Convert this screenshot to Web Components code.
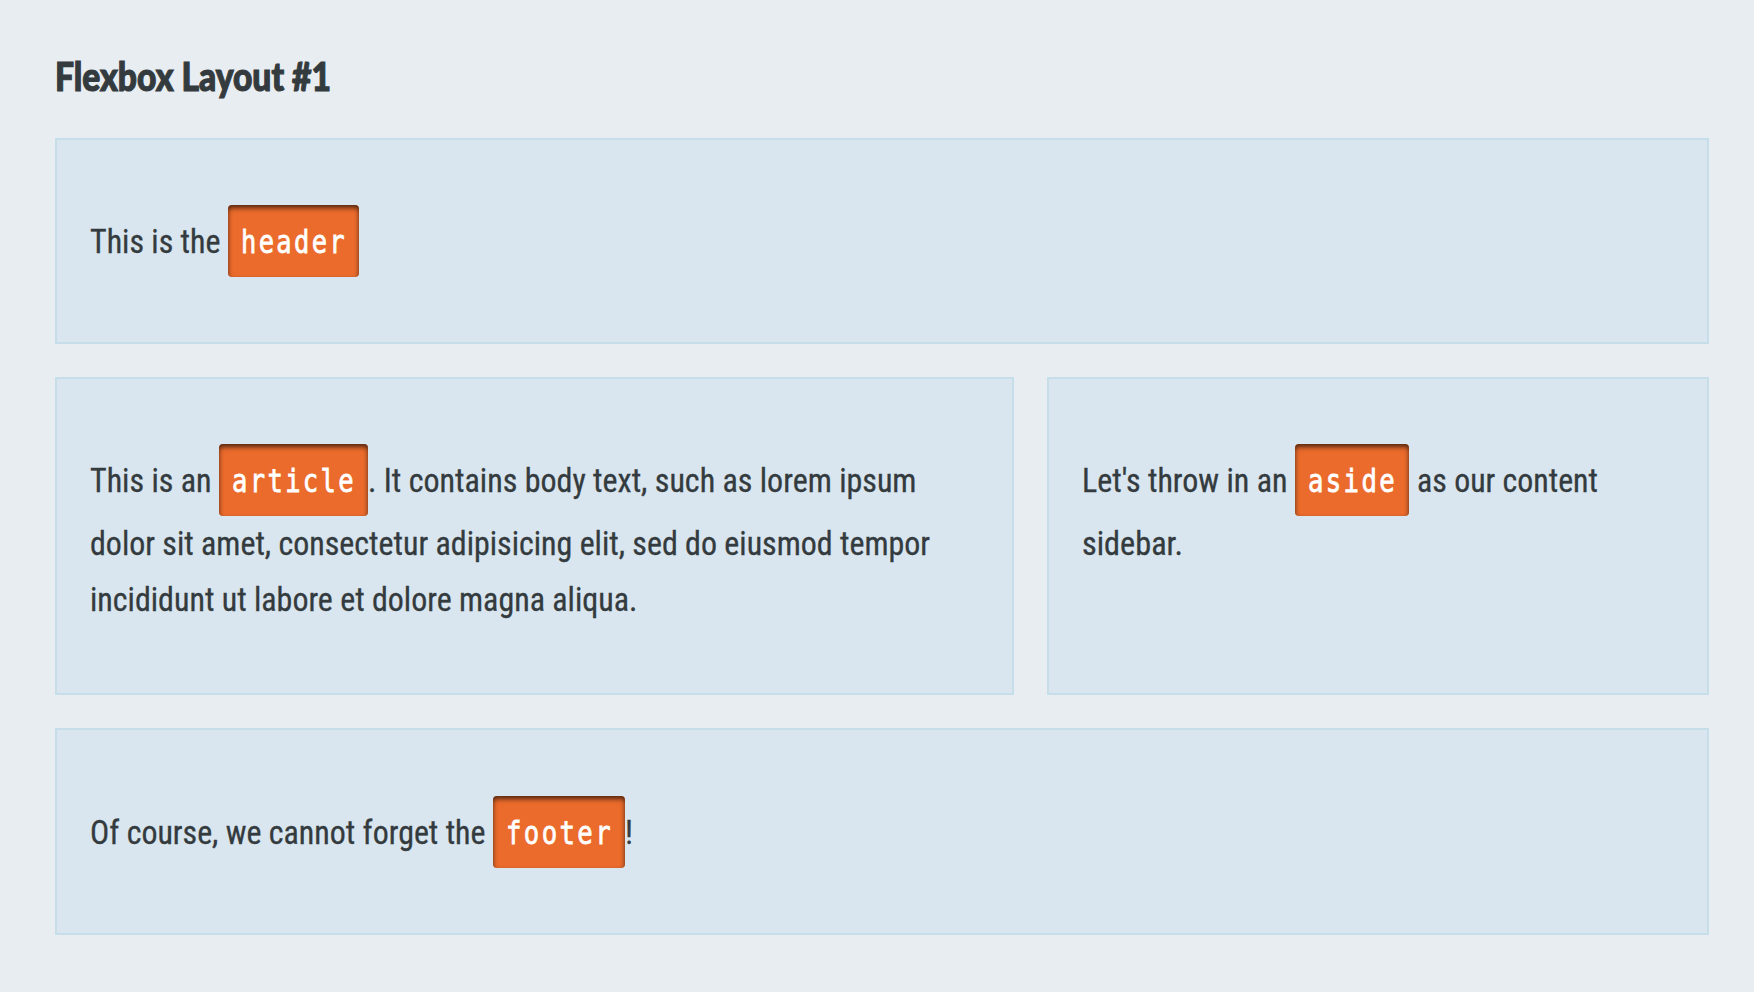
<!DOCTYPE html>
<html lang="en">
<head>
<meta charset="utf-8">
<title>Flexbox Layout #1</title>
<style>
html{background:#e8edf1}
body{margin:0;font:33px/56px "Roboto Condensed",Roboto,sans-serif;font-stretch:75%;color:#343b3e;-webkit-text-stroke:.3px #343b3e}
</style>
</head>
<body>
<demo-page>
  <fit-text slot="title" w="276" class="title" style="font:900 40px/56px Lato,sans-serif;-webkit-text-stroke:1.2px #343b3e">Flexbox Layout #1</fit-text>
  <demo-panel>
    <text-row tall><fit-text w="130.5">This is the</fit-text><code-tag gap w="106">header</code-tag></text-row>
  </demo-panel>
  <demo-columns>
    <demo-panel>
      <text-row tall><fit-text w="121.5">This is an</fit-text><code-tag gap w="124">article</code-tag><fit-text w="548.5">. It contains body text, such as lorem ipsum</fit-text></text-row>
      <text-row><fit-text w="840">dolor sit amet, consectetur adipisicing elit, sed do eiusmod tempor</fit-text></text-row>
      <text-row><fit-text w="547.5">incididunt ut labore et dolore magna aliqua.</fit-text></text-row>
    </demo-panel>
    <demo-panel>
      <text-row tall><fit-text w="205.5">Let's throw in an</fit-text><code-tag gap w="89">aside</code-tag><fit-text w="181" style="margin-left:7.5px">as our content</fit-text></text-row>
      <text-row><fit-text w="101">sidebar.</fit-text></text-row>
    </demo-panel>
  </demo-columns>
  <demo-panel last>
    <text-row tall><fit-text w="395.5">Of course, we cannot forget the</fit-text><code-tag gap w="107">footer</code-tag><fit-text w="8">!</fit-text></text-row>
  </demo-panel>
</demo-page>
<script>
class Base extends HTMLElement{
  constructor(){
    super();
    this.attachShadow({mode:'open'}).innerHTML=this.constructor.markup;
  }
}
customElements.define('demo-page',class extends Base{
  static markup=`<style>
    :host{display:flex;flex-direction:column;gap:33px;box-sizing:border-box;min-height:992px;padding:48px 45px 57px 55px;background:#e8edf1}
    h1{margin:0;height:57px;font:inherit;display:flex}
  </style><h1><slot name="title"></slot></h1><slot></slot>`;
});
customElements.define('demo-columns',class extends Base{
  static markup=`<style>
    :host{display:grid;grid-template-columns:959px 1fr;gap:33px}
  </style><slot></slot>`;
});
customElements.define('demo-panel',class extends Base{
  static markup=`<style>
    :host{display:block;box-sizing:border-box;background:#d9e6ef;border:2px solid #c5deea;padding:65px 33px}
    :host([last]){padding-top:66px}
  </style><slot></slot>`;
});
customElements.define('text-row',class extends Base{
  static markup=`<style>
    :host{display:flex;height:56px;align-items:baseline;white-space:nowrap}
    :host([tall]){height:72px}
  </style><slot></slot>`;
});
/* A run of text condensed to the width given by its w attribute. */
customElements.define('fit-text',class extends Base{
  static observedAttributes=['w'];
  static markup=`<style>
    :host{display:block;flex:none;white-space:nowrap}
    span{display:inline-block;transform-origin:0 50%}
  </style><span><slot></slot></span>`;
  connectedCallback(){this.fit()}
  attributeChangedCallback(){if(this.isConnected)this.fit()}
  fit(){
    const w=+this.getAttribute('w'),s=this.shadowRoot.querySelector('span');
    if(!w)return;
    this.style.width=w+'px';
    s.style.transform='none';
    s.style.transform='scaleX('+w/s.getBoundingClientRect().width+')';
  }
});
customElements.define('code-tag',class extends Base{
  static markup=`<style>
    :host{display:block;flex:none;box-sizing:border-box;height:72px;padding:9px 12.5px 7px;border-radius:4px;color:#fff;background:#eb6b2c;
      font:32.5px/56px "DejaVu Sans Mono",monospace;letter-spacing:3px;-webkit-text-stroke:.8px #fff;box-shadow:inset 0 3px 5px rgba(0,0,0,.65)}
    :host([gap]){margin-left:7.5px}
  </style><fit-text><slot></slot></fit-text>`;
  connectedCallback(){
    this.shadowRoot.querySelector('fit-text').setAttribute('w',this.getAttribute('w'));
  }
});
</script>
</body>
</html>
